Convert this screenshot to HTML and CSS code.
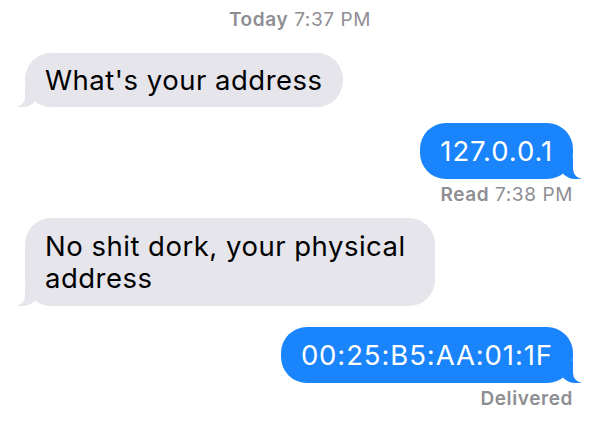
FILE: index.html
```html
<!DOCTYPE html>
<html lang="en">
<head>
    <meta charset="UTF-8">
    <title>Messages</title>
    <link rel="stylesheet" href="styles.css">
</head>
<body>
    <div class="thread">
        <div class="stamp"><b>Today</b> 7:37 PM</div>

        <div class="bubble them first">What's your address</div>

        <div class="bubble me">127.0.0.1</div>
        <div class="status"><b>Read</b> 7:38 PM</div>

        <div class="bubble them wide">No shit dork, your physical address</div>

        <div class="bubble me last">00:25:B5:AA:01:1F</div>
        <div class="status"><b>Delivered</b></div>
    </div>
</body>
</html>
```

FILE: styles.css
```css
* {
    box-sizing: border-box;
    margin: 0;
    padding: 0;
}

body {
    background: #fff;
    font-family: Inter, "Noto Sans", sans-serif;
    width: 600px;
    height: 428px;
    overflow: hidden;
}

.thread {
    display: flex;
    flex-direction: column;
    padding: 9px 27px 0 25px;
}

.stamp,
.status {
    color: #8e8e93;
    font-size: 19px;
    line-height: 22px;
    letter-spacing: 0.6px;
}

.stamp b,
.status b {
    font-weight: 600;
}

.stamp {
    text-align: center;
    padding-left: 2px;
}

.status {
    align-self: flex-end;
    margin-top: 5px;
}

.bubble {
    position: relative;
    max-width: 410px;
    padding: 11px 20px;
    border-radius: 26px;
    font-size: 27.5px;
    line-height: 32px;
    letter-spacing: 0.5px;
}

.bubble.them {
    align-self: flex-start;
    background: #e6e5eb;
    color: #000;
}

.bubble.me {
    align-self: flex-end;
    background: #1a84fd;
    color: #fff;
    padding-top: 12px;
    padding-bottom: 12px;
    letter-spacing: 0.9px;
}

.bubble.first {
    margin-top: 22px;
}

.bubble.me {
    margin-top: 16px;
}

.bubble.wide {
    margin-top: 12px;
    padding-top: 12px;
    padding-bottom: 12px;
}

.bubble.last {
    margin-top: 21px;
}

/* tails */
.bubble::before,
.bubble::after {
    content: "";
    position: absolute;
    bottom: 0;
    height: 22px;
}

.bubble.them::before {
    left: -8px;
    width: 22px;
    background: #e6e5eb;
    border-bottom-right-radius: 16px;
}

.bubble.them::after {
    left: -12px;
    width: 12px;
    background: #fff;
    border-bottom-right-radius: 10px;
}

.bubble.me::before {
    right: -8px;
    width: 22px;
    background: #1a84fd;
    border-bottom-left-radius: 16px;
}

.bubble.me::after {
    right: -12px;
    width: 12px;
    background: #fff;
    border-bottom-left-radius: 10px;
}
```
